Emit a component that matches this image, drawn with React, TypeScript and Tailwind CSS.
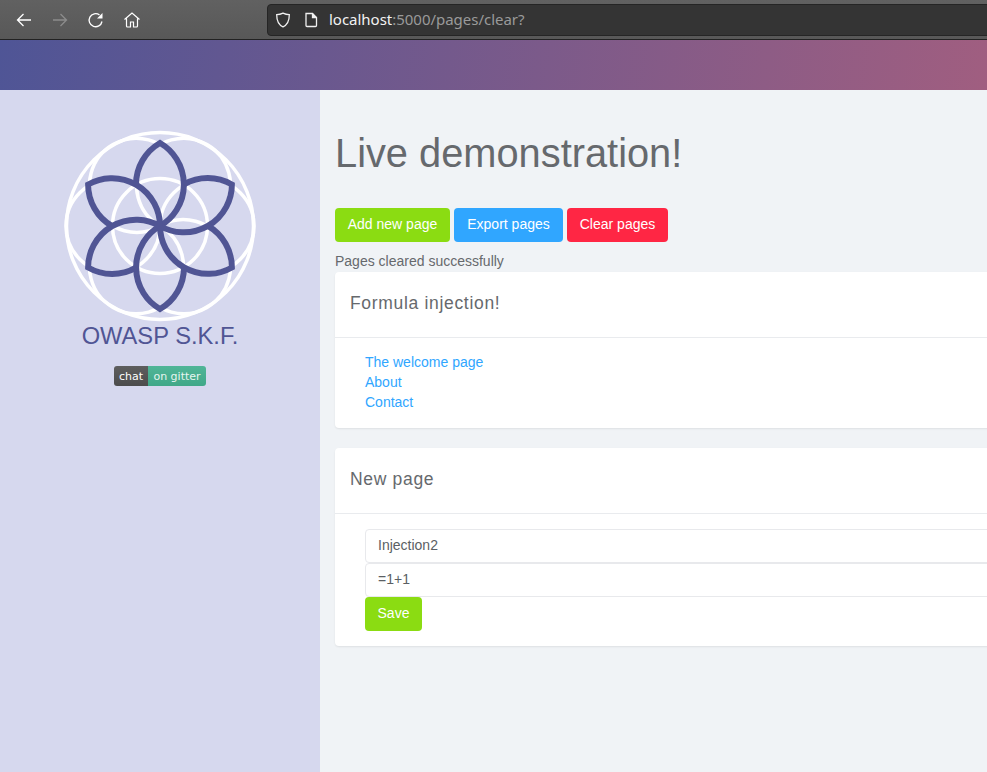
import React from 'react';

const SANS = "font-['Liberation_Sans',Arial,sans-serif]";

function BrowserIcons() {
  return (
    <div className="flex items-center w-[267px] h-full pl-[15px] gap-[18px] text-white">
      <svg width="18" height="18" viewBox="0 0 18 18" fill="none" stroke="currentColor" strokeWidth="1.3">
        <path d="M16 9H2.5M8.5 3L2.5 9l6 6" />
      </svg>
      <svg width="18" height="18" viewBox="0 0 18 18" fill="none" stroke="#8c8c8c" strokeWidth="1.3">
        <path d="M2 9h13.5M9.5 3l6 6-6 6" />
      </svg>
      <svg width="18" height="18" viewBox="0 0 18 18" fill="none" stroke="currentColor" strokeWidth="1.3">
        <path d="M15 10.5A6.5 6.5 0 1 1 12.5 4" />
        <path d="M15.5 2v5.5H10z" fill="currentColor" stroke="none" />
      </svg>
      <svg width="18" height="18" viewBox="0 0 18 18" fill="none" stroke="currentColor" strokeWidth="1.2">
        <path d="M1.5 8.5L9 2l7.5 6.5M3.5 7.5V15a1 1 0 0 0 1 1h3v-5h3v5h3a1 1 0 0 0 1-1V7.5" />
      </svg>
    </div>
  );
}

function AddressBar() {
  return (
    <div className="flex items-center h-[32px] flex-1 -mr-4 bg-[#343434] border border-[#252525] rounded-[4px] pl-[7px]">
      <svg width="16" height="16" viewBox="0 0 16 16" fill="none" stroke="#f0f0f0" strokeWidth="1.3">
        <path d="M8 1.2c2 1 4 1.5 6.3 1.5C14.3 9 12 13 8 14.8 4 13 1.7 9 1.7 2.7 4 2.7 6 2.2 8 1.2z" />
      </svg>
      <svg className="ml-[13px]" width="14" height="16" viewBox="0 0 14 16" fill="none" stroke="#f0f0f0" strokeWidth="1.3">
        <path d="M2 1.5h6.5L12.5 5.5v8a1 1 0 0 1-1 1H3a1 1 0 0 1-1-1z" />
        <path d="M8.5 1.5v4h4" fill="#f0f0f0" />
      </svg>
      <span className="ml-[11px] font-['Noto_Sans',sans-serif] text-[15px] tracking-[-0.02px] text-[#f2f2f2]">
        localhost<span className="text-[#9a9a9a]">:5000/pages/clear?</span>
      </span>
    </div>
  );
}

function SkfLogo() {
  const angles = [0, 60, 120, 180, 240, 300];
  return (
    <svg width="194" height="194" viewBox="-97 -97 194 194" fill="none">
      <circle r="93.5" stroke="#fff" strokeWidth="3.5" />
      <circle r="47.5" stroke="#fff" strokeWidth="3.5" />
      {angles.map((a) => (
        <circle key={a} cx="0" cy="-47" r="47" stroke="#fff" strokeWidth="3.5" transform={`rotate(${a + 30})`} />
      ))}
      {angles.map((a) => (
        <g key={a} transform={`rotate(${a})`} stroke="#505594" strokeWidth="6" strokeLinejoin="miter">
          <path d="M-24 -41.5A48 48 0 0 1 0 -83A48 48 0 0 1 0 0" />
        </g>
      ))}
    </svg>
  );
}

function Sidebar() {
  return (
    <aside className="flex flex-col items-center w-[320px] shrink-0 bg-[#d6d8ee] pt-[39px]">
      <SkfLogo />
      <h2 className={`${SANS} mt-[-2px] text-[23.7px] leading-[30px] text-[#505594]`}>OWASP S.K.F.</h2>
      <div className="flex mt-[15px] h-[20px] rounded-[3px] overflow-hidden font-['DejaVu_Sans',sans-serif] text-[11px] leading-[20px] text-white">
        <span className="w-[34px] pt-[1px] text-center bg-gradient-to-b from-[#5e5e5e] to-[#4c4c4c]">chat</span>
        <span className="w-[58px] pt-[1px] text-center bg-gradient-to-b from-[#50b597] to-[#40a888] text-[#e6f5f0]">on gitter</span>
      </div>
    </aside>
  );
}

function Button({ className, children }: { className: string; children: React.ReactNode }) {
  return (
    <button className={`h-[34px] pb-[2px] rounded-[4px] text-[14px] text-white ${className}`}>{children}</button>
  );
}

function Card({ title, className, children }: { title: string; className: string; children: React.ReactNode }) {
  return (
    <section className={`-mr-5 bg-white rounded-[4px] shadow-[0_1px_2px_rgba(0,0,0,0.08)] ${className}`}>
      <div className="h-[66px] flex items-center pl-[15px] pb-[2px] border-b border-[#e9ebee]">
        <h3 className="text-[17.5px] tracking-[0.68px] text-[#66696d]">{title}</h3>
      </div>
      {children}
    </section>
  );
}

function Field({ value }: { value: string }) {
  return (
    <input
      readOnly
      value={value}
      className="block w-full h-[34px] px-[12px] pb-[2px] bg-white border border-[#e8e9ec] rounded-[4px] text-[14px] text-[#5b5f64] outline-none"
    />
  );
}

export default function App() {
  return (
    <div className={`${SANS} w-[987px] h-[772px] overflow-hidden flex flex-col bg-[#f0f3f6] text-[14px] text-[#66696d]`}>
      <header className="flex items-center h-[40px] shrink-0 bg-gradient-to-b from-[#616161] to-[#585858] border-b border-[#222]">
        <BrowserIcons />
        <AddressBar />
      </header>
      <div className="h-[50px] shrink-0 bg-[linear-gradient(98deg,#4f5596,#a05e80)]" />
      <div className="flex flex-1 min-h-0">
        <Sidebar />
        <main className="flex-1 min-w-0 pl-[15px]">
          <h1 className="mt-[36px] text-[39.8px] leading-[54px] text-[#66696d]">Live demonstration!</h1>
          <div className="flex gap-[4px] mt-[28px]">
            <Button className="w-[115px] bg-[#8bdc12]">Add new page</Button>
            <Button className="w-[109px] bg-[#30a6ff]">Export pages</Button>
            <Button className="w-[101px] bg-[#ff2644]">Clear pages</Button>
          </div>
          <p className="h-[20px] mt-[9px] leading-[20px]">Pages cleared successfully</p>
          <Card title="Formula injection!" className="mt-[1px] h-[156px]">
            <ul className="pt-[14px] pl-[30px] leading-[20px] text-[#30a6ff]">
              <li>The welcome page</li>
              <li>About</li>
              <li>Contact</li>
            </ul>
          </Card>
          <Card title="New page" className="mt-[20px] h-[198px]">
            <form className="pt-[15px] pl-[30px]">
              <Field value="Injection2" />
              <Field value="=1+1" />
              <button type="button" className="block w-[57px] h-[34px] pb-[2px] rounded-[4px] bg-[#8bdc12] text-[14px] text-white">
                Save
              </button>
            </form>
          </Card>
        </main>
      </div>
    </div>
  );
}
